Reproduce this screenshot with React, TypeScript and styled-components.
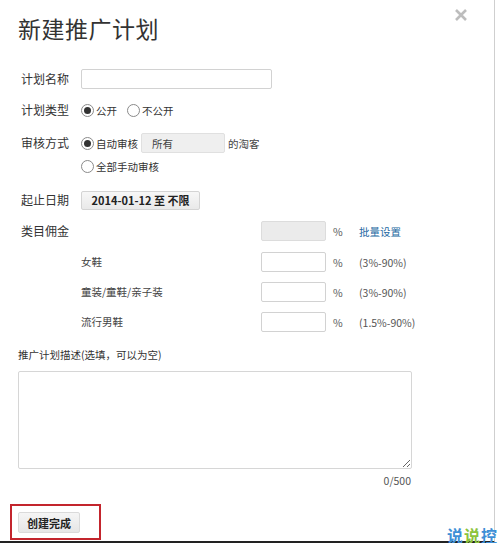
import React from 'react';
import styled, { createGlobalStyle } from 'styled-components';

const GlobalStyle = createGlobalStyle`
  html, body {
    margin: 0;
    padding: 0;
    background: #fff;
  }
  body {
    font-family: 'Noto Sans CJK SC', 'Liberation Sans', sans-serif;
    font-size: 12px;
    color: #333;
  }
`;

const Dialog = styled.div`
  position: relative;
  width: 495px;
  height: 543px;
  box-sizing: border-box;
  border-right: 1px solid #cfcfcf;
  border-bottom: 2px solid #222;
  padding: 13px 0 0 18px;
  display: flex;
  flex-direction: column;
`;

const Title = styled.h1`
  margin: 0;
  font-size: 23px;
  line-height: 30px;
  font-weight: 400;
  color: #333;
  letter-spacing: 0.5px;
`;

const CloseButton = styled.button`
  position: absolute;
  top: 8px;
  right: 26px;
  width: 14px;
  height: 14px;
  padding: 0;
  border: none;
  background: none;
  cursor: pointer;

  svg {
    display: block;
  }
`;

const Row = styled.div<{ $top: number; $indent?: number }>`
  display: flex;
  align-items: center;
  height: 20px;
  margin-top: ${(p) => p.$top}px;
  padding-left: ${(p) => p.$indent ?? 3}px;
`;

const Label = styled.span<{ $width?: number; $sub?: boolean }>`
  flex: none;
  width: ${(p) => p.$width ?? 60}px;
  font-size: ${(p) => (p.$sub ? '10.5px' : '12px')};
  color: ${(p) => (p.$sub ? '#444' : '#333')};
  line-height: 20px;
  white-space: nowrap;
`;

const TextInput = styled.input<{ $width: number; $disabled?: boolean }>`
  box-sizing: border-box;
  width: ${(p) => p.$width}px;
  height: 20px;
  border: 1px solid ${(p) => (p.$disabled ? '#dcdcdc' : '#d2d2d2')};
  border-radius: 2px;
  background: ${(p) => (p.$disabled ? '#ebebeb' : '#fff')};
  outline: none;
  padding: 0 4px;
  font: inherit;
`;

const RadioLabel = styled.label<{ $gap?: number }>`
  display: inline-flex;
  align-items: center;
  margin-left: ${(p) => p.$gap ?? 0}px;
  font-size: 10.5px;
  color: #333;
  white-space: nowrap;
`;

const RadioDot = styled.span<{ $checked?: boolean }>`
  position: relative;
  box-sizing: border-box;
  width: 13px;
  height: 13px;
  margin-right: 2px;
  border-radius: 50%;
  border: 1px solid #8a8a8a;
  background: #fff;

  &::after {
    content: '';
    display: ${(p) => (p.$checked ? 'block' : 'none')};
    position: absolute;
    left: 2px;
    top: 2px;
    width: 7px;
    height: 7px;
    border-radius: 50%;
    background: #333;
  }
`;

const SelectBox = styled.span`
  box-sizing: border-box;
  display: inline-flex;
  align-items: center;
  width: 84px;
  height: 20px;
  margin: 0 3px 0 3px;
  padding-left: 10px;
  background: #efefef;
  border: 1px solid #e0e0e0;
  border-radius: 2px;
  font-size: 10.5px;
  color: #444;
`;

const Note = styled.span`
  font-size: 10.5px;
  color: #444;
`;

const DateButton = styled.button`
  box-sizing: border-box;
  height: 19px;
  width: 119px;
  padding: 0;
  border: 1px solid #d4d4d4;
  border-radius: 2px;
  background: linear-gradient(#f7f7f7, #e9e9e9);
  font: inherit;
  font-size: 11px;
  font-weight: 700;
  color: #222;
  line-height: 17px;
`;

const Percent = styled.span`
  width: 33px;
  padding-left: 7px;
  box-sizing: border-box;
  flex: none;
  font-size: 10.5px;
  color: #555;
`;

const Range = styled.span`
  font-size: 10.5px;
  color: #555;
`;

const Link = styled.a`
  font-size: 10.5px;
  color: #2468a2;
  text-decoration: none;
  cursor: pointer;
`;

const DescLabel = styled.div`
  margin-top: 13px;
  height: 20px;
  line-height: 20px;
  font-size: 10.5px;
  color: #333;
`;

const TextArea = styled.textarea`
  box-sizing: border-box;
  width: 394px;
  height: 98px;
  margin-top: 6px;
  border: 1px solid #d6d6d6;
  border-radius: 2px;
  outline: none;
  font: inherit;
  resize: both;
`;

const Counter = styled.div`
  width: 393px;
  margin-top: 2px;
  height: 20px;
  line-height: 20px;
  text-align: right;
  font-size: 10.5px;
  color: #555;
`;

const Footer = styled.div`
  box-sizing: border-box;
  width: 91px;
  height: 36px;
  margin: 13px 0 0 -8px;
  padding: 6px 0 0 6px;
  border: 2px solid #c3252d;
`;

const SubmitButton = styled.button`
  box-sizing: border-box;
  width: 62px;
  height: 21px;
  padding: 0;
  border: 1px solid #dadada;
  border-radius: 2px;
  background: linear-gradient(#f5f5f5, #e6e6e6);
  font: inherit;
  font-size: 11px;
  font-weight: 700;
  color: #222;
`;

const Watermark = styled.div`
  position: absolute;
  right: -4px;
  bottom: -3px;
  font-size: 16px;
  font-weight: 700;
  line-height: 18px;
  letter-spacing: 1px;

  span:nth-child(odd) {
    color: #3d8fd6;
  }
  span:nth-child(even) {
    color: #8cc43c;
  }
`;

const categories = [
  { name: '女鞋', range: '(3%-90%)' },
  { name: '童装/童鞋/亲子装', range: '(3%-90%)' },
  { name: '流行男鞋', range: '(1.5%-90%)' },
];

const App = () => {
  return (
    <>
      <GlobalStyle />
      <Dialog>
        <Title>新建推广计划</Title>
        <CloseButton aria-label='关闭'>
          <svg width='14' height='14' viewBox='0 0 14 14'>
            <path d='M2 2L12 12M12 2L2 12' stroke='#bdbdbd' strokeWidth='2.6' />
          </svg>
        </CloseButton>

        <Row $top={26}>
          <Label>计划名称</Label>
          <TextInput $width={191} />
        </Row>

        <Row $top={11}>
          <Label>计划类型</Label>
          <RadioLabel>
            <RadioDot $checked />
            公开
          </RadioLabel>
          <RadioLabel $gap={10}>
            <RadioDot />
            不公开
          </RadioLabel>
        </Row>

        <Row $top={13}>
          <Label>审核方式</Label>
          <RadioLabel>
            <RadioDot $checked />
            自动审核
          </RadioLabel>
          <SelectBox>所有</SelectBox>
          <Note>的淘客</Note>
        </Row>
        <Row $top={3} $indent={63}>
          <RadioLabel>
            <RadioDot />
            全部手动审核
          </RadioLabel>
        </Row>

        <Row $top={14}>
          <Label>起止日期</Label>
          <DateButton>2014-01-12 至 不限</DateButton>
        </Row>

        <Row $top={11}>
          <Label $width={240}>类目佣金</Label>
          <TextInput $width={65} $disabled />
          <Percent>%</Percent>
          <Link>批量设置</Link>
        </Row>

        {categories.map((c) => (
          <Row key={c.name} $top={c.name === '女鞋' ? 11 : 10} $indent={63}>
            <Label $width={180} $sub>
              {c.name}
            </Label>
            <TextInput $width={65} />
            <Percent>%</Percent>
            <Range>{c.range}</Range>
          </Row>
        ))}

        <DescLabel>推广计划描述(选填，可以为空)</DescLabel>
        <TextArea />
        <Counter>0/500</Counter>

        <Footer>
          <SubmitButton>创建完成</SubmitButton>
        </Footer>

        <Watermark>
          <span>说</span>
          <span>说</span>
          <span>控</span>
        </Watermark>
      </Dialog>
    </>
  );
};

export default App;
